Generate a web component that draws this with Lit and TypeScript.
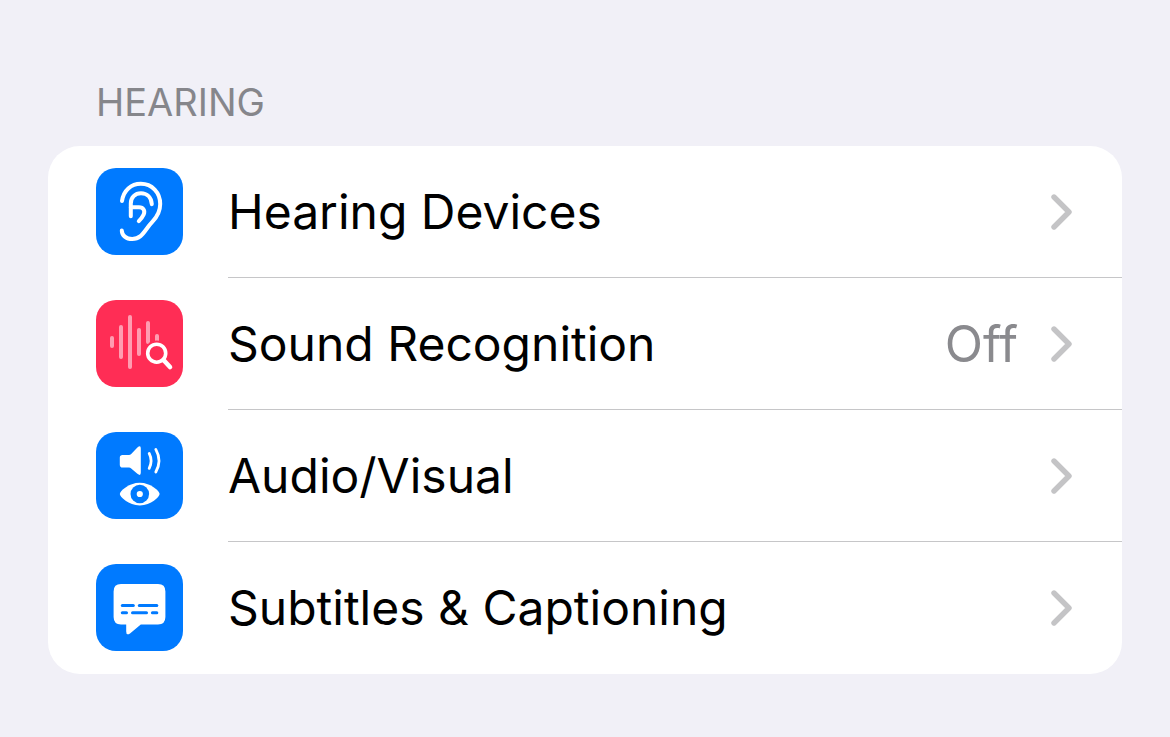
import { LitElement, html, svg, css, nothing, type TemplateResult } from "lit";
import { customElement, property } from "lit/decorators.js";

const earIcon = svg`
  <g fill="none" stroke="#fff" stroke-width="4" stroke-linecap="round" stroke-linejoin="round">
    <path d="M26 33 C27.5 22.5 35 15.8 44.8 15.8 C56 15.8 64.2 24.4 64.2 36 C64.2 43.5 61.5 48.4 56.5 53.6 C48.5 61.8 46.5 71 36.2 71 C30 71 26 67.4 25.8 62.6"/>
    <path d="M55.8 36.2 C55.4 29.4 51 25.2 45 25.2 C39 25.2 34.8 29.4 34.8 35.4 V48.2"/>
    <path d="M34.8 39.2 H43 C47.4 39.2 49.4 42.8 47.6 46.6 C46.4 49.2 44.8 51.2 42.8 53.2"/>
  </g>`;

const soundIcon = svg`
  <g fill="none" stroke="#ff9db1" stroke-width="4" stroke-linecap="round">
    <path d="M16 38 V46"/>
    <path d="M25 27 V57"/>
    <path d="M34 17 V67"/>
    <path d="M43 30 V54"/>
    <path d="M52 23 V42"/>
    <path d="M61 36 V42"/>
  </g>
  <circle cx="60.7" cy="53.2" r="12.6" fill="#ff2d55"/>
  <circle cx="60.7" cy="53.2" r="9" fill="none" stroke="#fff" stroke-width="3.6"/>
  <path d="M67.5 60 L74 67" fill="none" stroke="#fff" stroke-width="4.6" stroke-linecap="round"/>`;

const audioVisualIcon = svg`
  <path fill="#fff" d="M26.6 23 H33 Q34.2 23 35.2 22.1 L41.4 15.6 Q44.8 12.6 44.8 16.6 V40.6 Q44.8 44.6 41.4 41.8 L35.2 36.4 Q34.2 35.6 33 35.6 H26.6 Q23.8 35.6 23.8 32.8 V25.8 Q23.8 23 26.6 23 Z"/>
  <g fill="none" stroke="#fff" stroke-width="2.8" stroke-linecap="round">
    <path d="M53.2 21.4 Q57 28.8 53.2 36.4"/>
    <path d="M59.8 17.4 Q66.2 28.8 59.8 40"/>
  </g>
  <path fill="#fff" d="M23.8 62 C23.8 59.4 32.6 50.8 43.8 50.8 C55 50.8 63.6 59.4 63.6 62 C63.6 64.6 55 73.4 43.8 73.4 C32.6 73.4 23.8 64.6 23.8 62 Z"/>
  <circle cx="43.8" cy="62" r="9.3" fill="#007aff"/>
  <circle cx="43.8" cy="62" r="3.1" fill="#fff"/>`;

const captionsIcon = svg`
  <path fill="#fff" d="M25 20 H62 Q69.4 20 69.4 27.4 V53 Q69.4 60.4 62 60.4 H44.8 L34 69.4 Q30.2 72 30.2 67.6 V60.4 H25 Q17.6 60.4 17.6 53 V27.4 Q17.6 20 25 20 Z"/>
  <g stroke="#007aff" stroke-width="3" stroke-linecap="round">
    <path d="M26.3 41.5 H37.3"/>
    <path d="M43.3 41.5 H60.8"/>
    <path d="M26.3 48.7 H30.5"/>
    <path d="M36.5 48.7 H50.5"/>
    <path d="M56.4 48.7 H60.8"/>
  </g>`;

interface Setting {
  label: string;
  tint: "blue" | "pink";
  icon: TemplateResult | ReturnType<typeof svg>;
  value?: string;
}

const hearingSettings: Setting[] = [
  { label: "Hearing Devices", tint: "blue", icon: earIcon },
  { label: "Sound Recognition", tint: "pink", icon: soundIcon, value: "Off" },
  { label: "Audio/Visual", tint: "blue", icon: audioVisualIcon },
  { label: "Subtitles & Captioning", tint: "blue", icon: captionsIcon },
];

@customElement("settings-row")
export class SettingsRow extends LitElement {
  @property({ attribute: false }) setting!: Setting;

  static styles = css`
    :host {
      display: block;
    }
    .row {
      display: flex;
      align-items: flex-start;
      width: 100%;
      padding: 0 0 0 48px;
      border: 0;
      background: none;
      color: #000;
      font: inherit;
      text-align: left;
      cursor: pointer;
    }
    .tile {
      flex: none;
      width: 87px;
      height: 87px;
      margin: 22px 45px 22px 0;
      border-radius: 20px;
    }
    .blue {
      background: #007aff;
    }
    .pink {
      background: #ff2d55;
    }
    .body {
      flex: 1;
      display: flex;
      align-items: center;
      gap: 32px;
      min-height: 131px;
      padding-right: 49px;
      border-bottom: 1px solid #c6c6c8;
    }
    :host(:last-of-type) .body {
      border-bottom-color: transparent;
    }
    .label {
      flex: 1;
    }
    .value {
      color: #8a8a8e;
      font-size: 50px;
    }
    .chevron {
      flex: none;
      width: 23px;
      height: 36px;
    }
  `;

  render() {
    const { label, tint, icon, value } = this.setting;
    return html`
      <button class="row" type="button">
        <svg class="tile ${tint}" viewBox="0 0 87 87" aria-hidden="true">${icon}</svg>
        <span class="body">
          <span class="label">${label}</span>
          ${value ? html`<span class="value">${value}</span>` : nothing}
          <svg class="chevron" viewBox="0 0 23 36" aria-hidden="true">
            <path d="M4 3 L19 18 L4 33" fill="none" stroke="#c4c4c6"
              stroke-width="5.4" stroke-linecap="round" stroke-linejoin="round"/>
          </svg>
        </span>
      </button>
    `;
  }
}

@customElement("app-root")
export class AppRoot extends LitElement {
  static styles = css`
    :host {
      display: block;
      box-sizing: border-box;
      min-height: 100vh;
      padding: 79px 48px 63px;
      background: #f1f0f7;
      font-family: Inter, "Liberation Sans", sans-serif;
      font-size: 48px;
      line-height: 60px;
    }
    .heading {
      margin: 0 0 21px;
      padding-left: 48px;
      color: #86868b;
      font-size: 38px;
      font-weight: 400;
      line-height: 46px;
      text-transform: uppercase;
    }
    .group {
      overflow: hidden;
      border-radius: 32px;
      background: #fff;
    }
  `;

  render() {
    return html`
      <section aria-labelledby="hearing">
        <h2 class="heading" id="hearing">Hearing</h2>
        <div class="group">
          ${hearingSettings.map(
            (setting) => html`<settings-row .setting=${setting}></settings-row>`
          )}
        </div>
      </section>
    `;
  }
}
